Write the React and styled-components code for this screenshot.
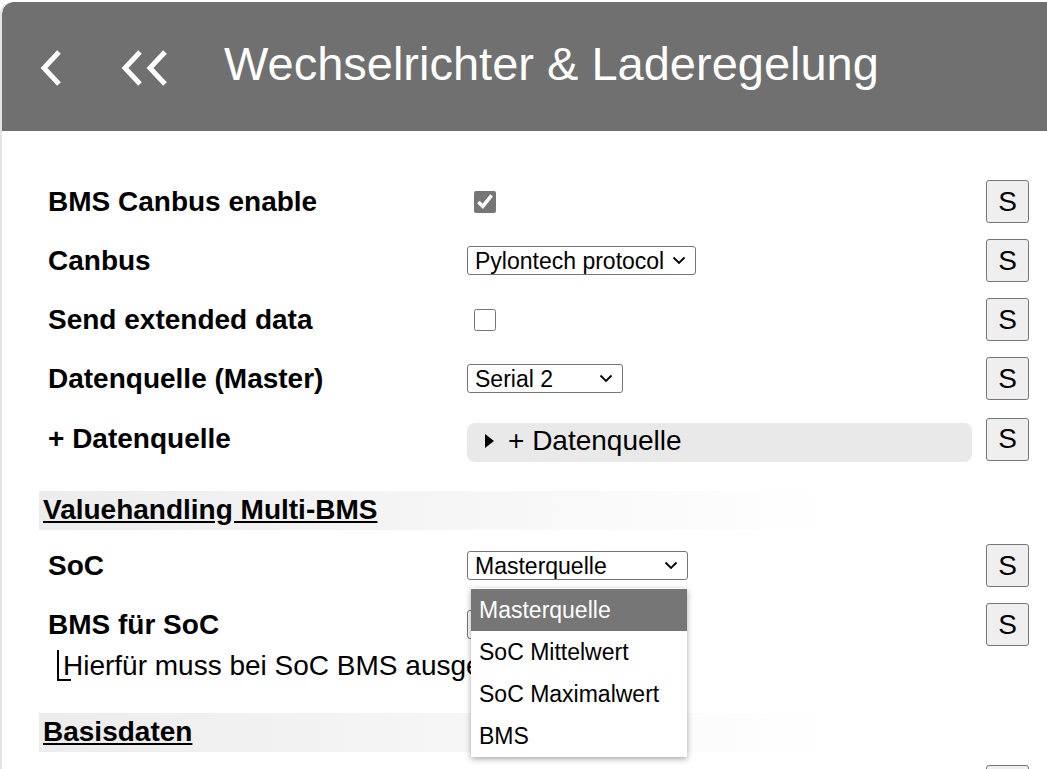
import { useState } from 'react'
import styled, { createGlobalStyle } from 'styled-components'

const GlobalStyle = createGlobalStyle`
    html, body {
        margin: 0;
        padding: 0;
        background: #fff;
        font-family: "Liberation Sans", Arial, sans-serif;
        overflow: hidden;
    }
`

const rows = [
    { label: 'BMS Canbus enable', kind: 'check', checked: true },
    { label: 'Canbus', kind: 'select', options: ['Pylontech protocol'], width: 229 },
    { label: 'Send extended data', kind: 'check', checked: false },
    { label: 'Datenquelle (Master)', kind: 'select', options: ['Serial 2'], width: 156 },
    { label: '+ Datenquelle', kind: 'details' },
]

const socOptions = ['Masterquelle', 'SoC Mittelwert', 'SoC Maximalwert', 'BMS']

// small chevron for the select boxes, as svg (not raster)
const arrow = `url("data:image/svg+xml,%3Csvg xmlns='http://www.w3.org/2000/svg' width='14' height='9' viewBox='0 0 14 9'%3E%3Cpolyline points='1.5,1.5 7,7 12.5,1.5' fill='none' stroke='%23000' stroke-width='1.8'/%3E%3C/svg%3E")`

const Chevron = ({ x }) => (
    <polyline points={`${x + 19},3 ${x + 4},19 ${x + 19},35`} fill="none" stroke="#fff" strokeWidth="5" strokeLinejoin="miter" />
)

const Control = ({ row }) => {
    if (row.kind === 'check') return <Check type="checkbox" defaultChecked={row.checked} />
    if (row.kind === 'select') return (
        <Select $w={row.width} defaultValue={row.options[0]}>
            {row.options.map(o => <option key={o}>{o}</option>)}
        </Select>
    )
    return <Details><summary>{row.label}</summary></Details>
}

const App = () => {
    const [soc] = useState('Masterquelle')

    return <Page>
        <GlobalStyle />
        <Header>
            <NavIcon width="26" height="40" viewBox="0 0 26 40"><Chevron x={0} /></NavIcon>
            <NavIcon width="52" height="40" viewBox="0 0 52 40"><Chevron x={0} /><Chevron x={25} /></NavIcon>
            <Title>Wechselrichter &amp; Laderegelung</Title>
        </Header>
        <Content>
            {rows.map(r => <Row key={r.label}>
                <Label>{r.label}</Label>
                <div><Control row={r} /></div>
                <SaveButton>S</SaveButton>
            </Row>)}

            <Section>Valuehandling Multi-BMS</Section>

            <Row>
                <Label>SoC</Label>
                <ControlCell>
                    <Select $w={221} defaultValue={soc}>
                        {socOptions.map(o => <option key={o}>{o}</option>)}
                    </Select>
                    <Listbox>
                        {socOptions.map(o => <Option key={o} $active={o === soc}>{o}</Option>)}
                    </Listbox>
                </ControlCell>
                <SaveButton>S</SaveButton>
            </Row>
            <Row $tight>
                <Label>BMS für SoC</Label>
                <div>
                    <Select $w={200} defaultValue="BMS 1">
                        <option>BMS 1</option>
                    </Select>
                </div>
                <SaveButton>S</SaveButton>
            </Row>
            <Hint>Hierfür muss bei SoC BMS ausgewählt sein</Hint>

            <Section $last>Basisdaten</Section>
            <Row>
                <Label />
                <div />
                <SaveButton>S</SaveButton>
            </Row>
        </Content>
    </Page>
}

export default App

const Page = styled.div`
    margin-top: 2px;
    min-height: 767px;
    border-left: 2px solid #e4e4e4;
    border-top-left-radius: 12px;
    overflow: hidden;
`

const Header = styled.header`
    height: 129px;
    background: #707070;
    border-top-left-radius: 12px;
    display: flex;
    align-items: center;
    padding-left: 38px;
    box-sizing: border-box;
    color: #fff;
`

const NavIcon = styled.svg`
    display: block;
    margin-right: 55px;
    margin-top: 4px;

    &:nth-of-type(2) {
        margin-right: 51px;
    }
`

const Title = styled.h1`
    margin: 0 0 6px;
    font-weight: normal;
    font-size: 47px;
    white-space: nowrap;
`

const Content = styled.main`
    padding: 49px 18px 0 37px;
`

const Row = styled.div`
    display: grid;
    grid-template-columns: 405px 505px 43px;
    column-gap: 14px;
    align-items: center;
    padding-left: 9px;
    min-height: 43px;
    margin-bottom: ${p => p.$tight ? '4px' : '16px'};
`

const Label = styled.div`
    font-weight: bold;
    font-size: 28px;
    color: #000;
    white-space: nowrap;
`

const ControlCell = styled.div`
    position: relative;
`

const Check = styled.input`
    width: 22px;
    height: 22px;
    margin: 0 0 0 7px;
    display: block;
    accent-color: #767676;
`

const Select = styled.select`
    appearance: none;
    font-family: "Liberation Sans", Arial, sans-serif;
    font-size: 23px;
    width: ${p => p.$w}px;
    height: 29px;
    padding: 0 0 0 7px;
    border: 1px solid #767676;
    border-radius: 3px;
    background: #fff ${arrow} no-repeat right 9px center;
    color: #000;
    display: block;
`

const Details = styled.details`
    background: #e9e9e9;
    border-radius: 8px;
    height: 39px;
    box-sizing: border-box;
    padding: 2px 0 0 18px;
    margin-top: 7px;
    font-size: 28px;

    summary {
        list-style: none;
        display: flex;
        align-items: center;
        cursor: pointer;
    }
    summary::-webkit-details-marker {
        display: none;
    }
    summary::before {
        content: '';
        width: 0;
        height: 0;
        border-top: 7px solid transparent;
        border-bottom: 7px solid transparent;
        border-left: 9px solid #000;
        margin-right: 14px;
        margin-top: -1px;
    }
`

const SaveButton = styled.button`
    width: 43px;
    height: 43px;
    border: 1px solid #767676;
    border-radius: 3px;
    background: #efefef;
    font-family: "Liberation Sans", Arial, sans-serif;
    font-size: 28px;
    color: #000;
    padding: 0;
`

const Section = styled.h2`
    margin: 29px 0 14px;
    width: 796px;
    height: 39px;
    box-sizing: border-box;
    padding: 3px 0 0 4px;
    background: linear-gradient(to right, #ececec, #fff);
    font-size: 28px;
    font-weight: bold;
    text-decoration: underline;
    color: #000;
    white-space: nowrap;
    ${p => p.$last && 'margin-top: 0; margin-bottom: 13px;'}
`

const Hint = styled.p`
    position: relative;
    margin: 0 0 32px 18px;
    padding-left: 6px;
    font-size: 28px;
    line-height: 31px;
    color: #000;
    white-space: nowrap;

    &::before {
        content: '';
        position: absolute;
        left: 0;
        top: 0;
        width: 12px;
        height: 29px;
        border-left: 2px solid #000;
        border-bottom: 2px solid #000;
    }
`

const Listbox = styled.ul`
    position: absolute;
    top: 37px;
    left: 4px;
    width: 216px;
    margin: 0;
    padding: 1px 0 0;
    list-style: none;
    background: #fff;
    box-shadow: 0 2px 6px rgba(0, 0, 0, 0.35);
    z-index: 5;
`

const Option = styled.li`
    height: 42px;
    line-height: 42px;
    padding-left: 8px;
    font-size: 23px;
    white-space: nowrap;
    background: ${p => p.$active ? '#767676' : '#fff'};
    color: ${p => p.$active ? '#fff' : '#000'};
`
